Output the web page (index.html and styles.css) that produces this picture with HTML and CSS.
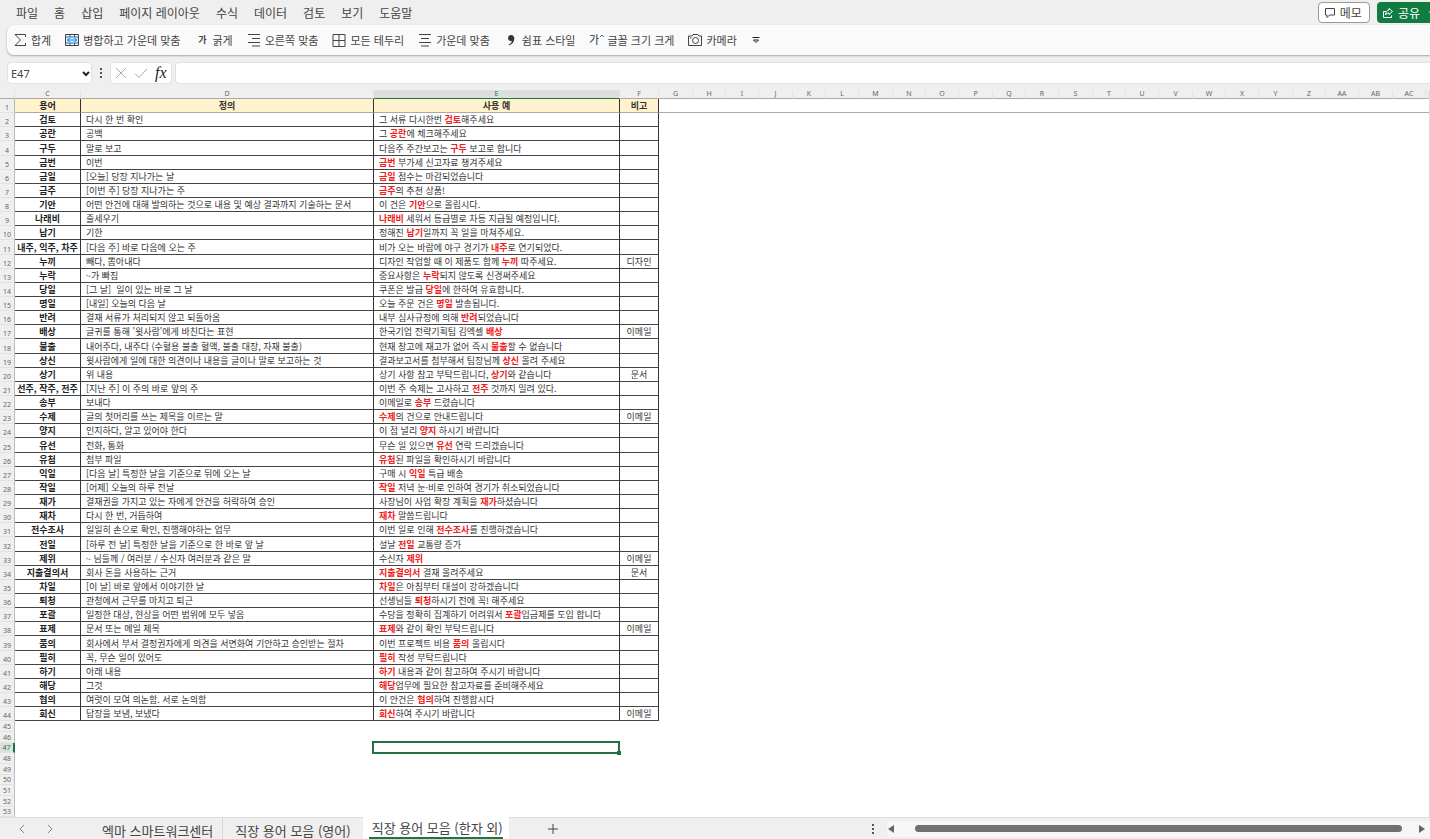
FILE: index.html
```html
<!DOCTYPE html>
<html lang="ko">
<head>
<meta charset="utf-8">
<title>직장 용어 모음</title>
<link rel="stylesheet" href="styles.css">
</head>
<body>
<header class="menubar">
  <nav class="menus">
    <button>파일</button><button>홈</button><button>삽입</button><button>페이지 레이아웃</button><button>수식</button><button>데이터</button><button>검토</button><button>보기</button><button>도움말</button>
  </nav>
  <div class="actions">
    <button class="memo"><svg width="12" height="12" viewBox="0 0 12 12"><path d="M1.500 1.500h9v6.500h-5l-2.500 2.500v-2.500h-1.500z"/></svg>메모</button>
    <button class="share"><svg width="12" height="12" viewBox="0 0 12 12"><path d="M4 4.500H1.500v6h8V8.500M7 1.500l3.500 3L7 7.500V6C5.500 6 4.500 6.500 3.500 8 3.500 5 5 3.200 7 3z"/></svg>공유<svg class="share-more" width="8" height="8" viewBox="0 0 8 8"><path d="M1 2.500l3 3 3-3"/></svg></button>
  </div>
</header>

<div class="toolbar">
  <button><svg width="14" height="14" viewBox="0 0 14 14"><path d="M12.500 4V1.500H2L7.500 7 2 12.500h10.500V10"/></svg>합계</button>
  <button><svg width="14" height="14" viewBox="0 0 14 14"><path class="pale" d="M1 4h12v6H1z"/><path d="M.5 1.500v11h13v-11zM5 1.500V4M9.500 1.500V4M5 10v2.500M9.500 10v2.500"/><path class="blue-line" d="M.5 4h13M.5 10h13M2.500 7h9M4.500 5l-2 2 2 2M9.500 5l2 2-2 2"/></svg>병합하고 가운데 맞춤</button>
  <button><span class="glyph bold">가</span>굵게</button>
  <button><svg width="14" height="14" viewBox="0 0 14 14"><path d="M1 1.500h12M5 5.500h8M1 9.500h12M5 13h8"/></svg>오른쪽 맞춤</button>
  <button><svg width="14" height="14" viewBox="0 0 14 14"><path d="M1 1.500h12v12H1zM7 1.500v12M1 7.500h12"/></svg>모든 테두리</button>
  <button><svg width="14" height="14" viewBox="0 0 14 14"><path d="M1 1.500h12M3 5.500h8M1 9.500h12M3 13h8"/></svg>가운데 맞춤</button>
  <button><svg width="14" height="14" viewBox="0 0 14 14"><path class="solid" d="M7 2a3 3 0 1 0 .8 5.900C7.500 9.500 6.500 10.800 4.500 11.800l.5.7C8.500 11.200 10.300 8.800 10.300 5.300 10.300 3.300 9 2 7 2z"/></svg>쉼표 스타일</button>
  <button><svg class="grow" width="14" height="14" viewBox="0 0 14 14"><text x="-1" y="11">가</text><path class="blue-line" d="M10 4l2-2 2 2"/></svg>글꼴 크기 크게</button>
  <button><svg width="14" height="14" viewBox="0 0 14 14"><path d="M.5 3h3.500l1-1.500h5L11 3h2.500v9.500H.5z"/><circle cx="7.500" cy="7.500" r="3"/><path d="M2 5h1.500"/></svg>카메라</button>
  <button aria-label="도구 모음 옵션"><svg class="more" width="10" height="8" viewBox="0 0 10 8"><path d="M1.500 1.500h7M2.500 4L5 6.500 7.500 4z"/></svg></button>
</div>

<div class="formulabar">
  <div class="namebox">
    <select aria-label="이름 상자"><option>E47</option></select>
    <svg width="8" height="6" viewBox="0 0 8 6"><path d="M1 1l3 3 3-3"/></svg>
  </div>
  <svg class="dots" width="4" height="12" viewBox="0 0 4 12"><path d="M1 1h2v2H1zM1 5h2v2H1zM1 9h2v2H1z"/></svg>
  <div class="entry">
    <button aria-label="취소"><svg width="12" height="12" viewBox="0 0 12 12"><path d="M1 1l10 10M11 1L1 11"/></svg></button>
    <button aria-label="입력"><svg width="14" height="12" viewBox="0 0 14 12"><path d="M1 6.500l4 4L13 2"/></svg></button>
    <button class="fx" aria-label="함수 삽입">fx</button>
  </div>
  <input class="formula" type="text" aria-label="수식 입력줄">
</div>

<main class="sheet">
<table>
<colgroup>
<col class="w-num"><col class="w-c"><col class="w-d"><col class="w-e"><col class="w-f">
<col class="w-b"><col class="w-a"><col class="w-a"><col class="w-b"><col class="w-a"><col class="w-a"><col class="w-b"><col class="w-a"><col class="w-a"><col class="w-b"><col class="w-a"><col class="w-a"><col class="w-b"><col class="w-a"><col class="w-a"><col class="w-b"><col class="w-a"><col class="w-a"><col class="w-b"><col class="w-a"><col class="w-a"><col class="w-b"><col class="w-a"><col>
</colgroup>
<thead>
<tr><th class="corner"></th><th>C</th><th>D</th><th class="on">E</th><th>F</th><th>G</th><th>H</th><th>I</th><th>J</th><th>K</th><th>L</th><th>M</th><th>N</th><th>O</th><th>P</th><th>Q</th><th>R</th><th>S</th><th>T</th><th>U</th><th>V</th><th>W</th><th>X</th><th>Y</th><th>Z</th><th>AA</th><th>AB</th><th>AC</th><th></th></tr>
</thead>
<tbody class="data">
<tr class="title"><th>1</th><td>용어</td><td>정의</td><td>사용 예</td><td>비고</td><td class="rest" colspan="24"></td></tr>
<tr><th>2</th><td>검토</td><td>다시 한 번 확인</td><td>그 서류 다시한번 <b>검토</b>해주세요</td><td></td></tr>
<tr><th>3</th><td>공란</td><td>공백</td><td>그 <b>공란</b>에 체크해주세요</td><td></td></tr>
<tr><th>4</th><td>구두</td><td>말로 보고</td><td>다음주 주간보고는 <b>구두</b> 보고로 합니다</td><td></td></tr>
<tr><th>5</th><td>금번</td><td>이번</td><td><b>금번</b> 부가세 신고자료 챙겨주세요</td><td></td></tr>
<tr><th>6</th><td>금일</td><td>[오늘] 당장 지나가는 날</td><td><b>금일</b> 접수는 마감되었습니다</td><td></td></tr>
<tr><th>7</th><td>금주</td><td>[이번 주] 당장 지나가는 주</td><td><b>금주</b>의 추천 상품!</td><td></td></tr>
<tr><th>8</th><td>기안</td><td>어떤 안건에 대해 발의하는 것으로 내용 및 예상 결과까지 기술하는 문서</td><td>이 건은 <b>기안</b>으로 올립시다.</td><td></td></tr>
<tr><th>9</th><td>나래비</td><td>줄세우기</td><td><b>나래비</b> 세워서 등급별로 차등 지급될 예정입니다.</td><td></td></tr>
<tr><th>10</th><td>납기</td><td>기한</td><td>정해진 <b>납기</b>일까지 꼭 일을 마쳐주세요.</td><td></td></tr>
<tr><th>11</th><td>내주, 익주, 차주</td><td>[다음 주] 바로 다음에 오는 주</td><td>비가 오는 바람에 야구 경기가 <b>내주</b>로 연기되었다.</td><td></td></tr>
<tr><th>12</th><td>누끼</td><td>빼다, 뽑아내다</td><td>디자인 작업할 때 이 제품도 함께 <b>누끼</b> 따주세요.</td><td>디자인</td></tr>
<tr><th>13</th><td>누락</td><td>~가 빠짐</td><td>중요사항은 <b>누락</b>되지 않도록 신경써주세요</td><td></td></tr>
<tr><th>14</th><td>당일</td><td>[그 날]&nbsp; 일이 있는 바로 그 날</td><td>쿠폰은 발급 <b>당일</b>에 한하여 유효합니다.</td><td></td></tr>
<tr><th>15</th><td>명일</td><td>[내일] 오늘의 다음 날</td><td>오늘 주문 건은 <b>명일</b> 발송됩니다.</td><td></td></tr>
<tr><th>16</th><td>반려</td><td>결재 서류가 처리되지 않고 되돌아옴</td><td>내부 심사규정에 의해 <b>반려</b>되었습니다</td><td></td></tr>
<tr><th>17</th><td>배상</td><td>글귀를 통해 '윗사람'에게 바친다는 표현</td><td>한국기업 전략기획팀 김엑셀 <b>배상</b></td><td>이메일</td></tr>
<tr><th>18</th><td>불출</td><td>내어주다, 내주다 (수혈용 불출 혈액, 불출 대장, 자재 불출)</td><td>현재 창고에 재고가 없어 즉시 <b>불출</b>할 수 없습니다</td><td></td></tr>
<tr><th>19</th><td>상신</td><td>윗사람에게 일에 대한 의견이나 내용을 글이나 말로 보고하는 것</td><td>결과보고서를 첨부해서 팀장님께 <b>상신</b> 올려 주세요</td><td></td></tr>
<tr><th>20</th><td>상기</td><td>위 내용</td><td>상기 사항 참고 부탁드립니다, <b>상기</b>와 같습니다</td><td>문서</td></tr>
<tr><th>21</th><td>선주, 작주, 전주</td><td>[지난 주] 이 주의 바로 앞의 주</td><td>이번 주 숙제는 고사하고 <b>전주</b> 것까지 밀려 있다.</td><td></td></tr>
<tr><th>22</th><td>송부</td><td>보내다</td><td>이메일로 <b>송부</b> 드렸습니다</td><td></td></tr>
<tr><th>23</th><td>수제</td><td>글의 첫머리를 쓰는 제목을 이르는 말</td><td><b>수제</b>의 건으로 안내드립니다</td><td>이메일</td></tr>
<tr><th>24</th><td>양지</td><td>인지하다, 알고 있어야 한다</td><td>이 점 널리 <b>양지</b> 하시기 바랍니다</td><td></td></tr>
<tr><th>25</th><td>유선</td><td>전화, 통화</td><td>무슨 일 있으면 <b>유선</b> 연락 드리겠습니다</td><td></td></tr>
<tr><th>26</th><td>유첨</td><td>첨부 파일</td><td><b>유첨</b>된 파일을 확인하시기 바랍니다</td><td></td></tr>
<tr><th>27</th><td>익일</td><td>[다음 날] 특정한 날을 기준으로 뒤에 오는 날</td><td>구매 시 <b>익일</b> 특급 배송</td><td></td></tr>
<tr><th>28</th><td>작일</td><td>[어제] 오늘의 하루 전날</td><td><b>작일</b> 저녁 눈·비로 인하여 경기가 취소되었습니다</td><td></td></tr>
<tr><th>29</th><td>재가</td><td>결재권을 가지고 있는 자에게 안건을 허락하여 승인</td><td>사장님이 사업 확장 계획을 <b>재가</b>하셨습니다</td><td></td></tr>
<tr><th>30</th><td>재차</td><td>다시 한 번, 거듭하여</td><td><b>재차</b> 말씀드립니다</td><td></td></tr>
<tr><th>31</th><td>전수조사</td><td>일일히 손으로 확인, 진행해야하는 업무</td><td>이번 일로 인해 <b>전수조사</b>를 진행하겠습니다</td><td></td></tr>
<tr><th>32</th><td>전일</td><td>[하루 전 날] 특정한 날을 기준으로 한 바로 앞 날</td><td>설날 <b>전일</b> 교통량 증가</td><td></td></tr>
<tr><th>33</th><td>제위</td><td>~ 님들께 / 여러분 / 수신자 여러분과 같은 말</td><td>수신자 <b>제위</b></td><td>이메일</td></tr>
<tr><th>34</th><td>지출결의서</td><td>회사 돈을 사용하는 근거</td><td><b>지출결의서</b> 결재 올려주세요</td><td>문서</td></tr>
<tr><th>35</th><td>차일</td><td>[이 날] 바로 앞에서 이야기한 날</td><td><b>차일</b>은 아침부터 대설이 강하겠습니다</td><td></td></tr>
<tr><th>36</th><td>퇴청</td><td>관청에서 근무를 마치고 퇴근</td><td>선생님들 <b>퇴청</b>하시기 전에 꼭! 해주세요</td><td></td></tr>
<tr><th>37</th><td>포괄</td><td>일정한 대상, 현상을 어떤 범위에 모두 넣음</td><td>수당을 정확히 집계하기 어려워서 <b>포괄</b>입금제를 도입 합니다</td><td></td></tr>
<tr><th>38</th><td>표제</td><td>문서 또는 메일 제목</td><td><b>표제</b>와 같이 확인 부탁드립니다</td><td>이메일</td></tr>
<tr><th>39</th><td>품의</td><td>회사에서 부서 결정권자에게 의견을 서면화여 기안하고 승인받는 절차</td><td>이번 프로젝트 비용 <b>품의</b> 올립시다</td><td></td></tr>
<tr><th>40</th><td>필히</td><td>꼭, 무슨 일이 있어도</td><td><b>필히</b> 작성 부탁드립니다</td><td></td></tr>
<tr><th>41</th><td>하기</td><td>아래 내용</td><td><b>하기</b> 내용과 같이 참고하여 주시기 바랍니다</td><td></td></tr>
<tr><th>42</th><td>해당</td><td>그것</td><td><b>해당</b>업무에 필요한 참고자료를 준비해주세요</td><td></td></tr>
<tr><th>43</th><td>협의</td><td>여럿이 모여 의논함. 서로 논의함</td><td>이 안건은 <b>협의</b>하여 진행합시다</td><td></td></tr>
<tr><th>44</th><td>회신</td><td>답장을 보냄, 보냈다</td><td><b>회신</b>하여 주시기 바랍니다</td><td>이메일</td></tr>
</tbody>
<tbody class="blank">
<tr><th>45</th></tr>
<tr><th>46</th></tr>
<tr><th class="on">47</th><td></td><td></td><td class="selected"></td></tr>
<tr><th>48</th></tr>
<tr><th>49</th></tr>
<tr><th>50</th></tr>
<tr><th>51</th></tr>
<tr><th>52</th></tr>
<tr><th>53</th></tr>
</tbody>
</table>
</main>

<footer class="tabbar">
  <div class="arrows">
    <button aria-label="이전 시트"><svg width="6" height="10" viewBox="0 0 6 10"><path d="M5 1L1 5l4 4"/></svg></button>
    <button aria-label="다음 시트"><svg width="6" height="10" viewBox="0 0 6 10"><path d="M1 1l4 4-4 4"/></svg></button>
  </div>
  <button class="tab">엑마 스마트워크센터</button>
  <button class="tab">직장 용어 모음 (영어)</button>
  <button class="tab current"><span>직장 용어 모음 (한자 외)</span></button>
  <button class="add" aria-label="새 시트"><svg width="12" height="12" viewBox="0 0 12 12"><path d="M6 1v10M1 6h10"/></svg></button>
  <svg class="dots" width="4" height="12" viewBox="0 0 4 12"><path d="M1 1h2v2H1zM1 5h2v2H1zM1 9h2v2H1z"/></svg>
  <div class="scroll">
    <button aria-label="왼쪽으로"><svg width="8" height="10" viewBox="0 0 8 10"><path d="M7 1v8L1 5z"/></svg></button>
    <div class="thumb"></div>
    <button aria-label="오른쪽으로"><svg width="8" height="10" viewBox="0 0 8 10"><path d="M1 1v8l6-4z"/></svg></button>
  </div>
</footer>
</body>
</html>
```

FILE: styles.css
```css
* { box-sizing: border-box; }

body {
  margin: 0;
  height: 100vh;
  display: flex;
  flex-direction: column;
  overflow: hidden;
  background: #efefef;
  color: #444;
  font-family: "Noto Sans CJK KR", "Noto Sans", sans-serif;
  font-size: 11px;
}

button, select, input { font: inherit; color: inherit; }
button { display: flex; align-items: center; padding: 0; border: 0; background: none; white-space: nowrap; }
svg { flex: none; fill: none; stroke: #444; }

/* menu */
.menubar { display: flex; justify-content: space-between; height: 25px; overflow: hidden; font-size: 12px; }
.menus { display: flex; gap: 16px; padding-left: 16px; }
.actions { display: flex; gap: 7px; padding: 2px 0; }
.actions button { height: 21px; line-height: 16px; border-radius: 4px; gap: 4px; }
.memo { padding: 0 7px 0 5px; border: 1px solid #999; background: #fff; }
.actions .share { margin-right: -14px; padding: 0 8px 0 5px; background: #107c41; color: #fff; }
.share svg { stroke: #fff; }
.share .share-more { margin-left: 4px; }

/* quick tools */
.toolbar {
  display: flex;
  gap: 14px;
  height: 30px;
  margin-left: 7px;
  padding-left: 6px;
  border-radius: 7px 0 0 7px;
  background: #fafafa;
  box-shadow: 0 1px 2px #0000004d;
}
.toolbar button { gap: 4px; line-height: 16px; }
.glyph { width: 14px; padding-left: 2px; font-size: 9px; }
.bold { font-weight: 700; }
.grow { overflow: visible; }
.grow text { fill: #333; stroke: none; font-size: 11px; }
.pale { fill: #d6ebfa; stroke: none; }
.blue-line { stroke: #1c7ac7; }
.solid { fill: #333; stroke: none; }
.more { stroke: #222; }

/* formula bar */
.formulabar { display: flex; align-items: center; height: 22px; margin: 7px 0 6px 7px; }
.namebox { position: relative; width: 85px; }
.namebox select {
  appearance: none;
  display: block;
  width: 100%;
  height: 22px;
  padding: 0 3px;
  border: 1px solid #e1e1e1;
  border-radius: 4px;
  background: #fff;
  font-family: "Noto Sans", sans-serif;
  font-size: 11px;
}
.namebox svg { position: absolute; right: 2px; top: 9px; stroke: #222; stroke-width: 2; pointer-events: none; }
.dots { stroke: none; fill: #555; }
.formulabar .dots { margin: 0 7px; }
.entry { display: flex; align-items: center; gap: 7px; width: 62px; height: 22px; padding-left: 4px; border: 1px solid #e1e1e1; border-radius: 4px; background: #fff; }
.entry svg { stroke: #aaa; }
.fx { font-family: "Liberation Serif", serif; font-style: italic; font-size: 16px; line-height: 16px; color: #222; }
.formula { flex: 1; height: 22px; margin-left: 3px; border: 1px solid #e1e1e1; border-right: 0; border-radius: 4px 0 0 4px; background: #fff; }

/* grid */
.sheet { flex: 1; min-height: 0; overflow: hidden; background: linear-gradient(#efefef 9px, #fff 9px); border-right: 1px solid #dcdcdc; }
table { width: 100%; table-layout: fixed; border-collapse: separate; border-spacing: 0; }
.w-num { width: 15px; }
.w-c { width: 66px; }
.w-d { width: 293px; }
.w-e { width: 246px; }
.w-f { width: 39px; }
.w-a { width: 33px; }
.w-b { width: 34px; }
th, td { padding: 0; white-space: nowrap; }
th { font-family: "Noto Sans", sans-serif; font-size: 7px; font-weight: 400; color: #666; background: #efefef; }
thead th { height: 9px; line-height: 8px; border-right: 1px solid #e2e2e2; border-bottom: 1px solid #aaa; }
thead .on { background: #dedede; color: #107c41; border-bottom-color: #107c41; }
tbody th { line-height: 9px; vertical-align: bottom; border-right: 1px solid #bbb; border-bottom: 1px solid #e2e2e2; }
tbody .on { background: #dedede; color: #107c41; border-right: 2px solid #107c41; }

.data tr { height: 14px; }
.data tr:nth-child(7n + 4) { height: 15px; }
.data td { padding: 0 5px; border-right: 1px solid #333; border-bottom: 1px solid #444; font-size: 9px; line-height: 13px; color: #333; overflow: hidden; }
.data td:nth-child(2) { padding: 0; text-align: center; font-weight: 700; color: #222; }
.data td:nth-child(5) { padding: 0; text-align: center; }
.data .title td { padding: 0; text-align: center; font-weight: 700; background: #fff2cc; border-bottom-color: #aaa; }
.data .title .rest { background: #fff; border-right: 0; }
.data b { color: #f02020; }

.blank tr { height: 11px; }
.blank tr:nth-child(3n) { height: 10px; }
.selected { position: relative; }
.selected::before { content: ""; position: absolute; inset: -2px 0 -1px -2px; border: 2px solid #217346; }
.selected::after { content: ""; position: absolute; right: -1px; bottom: -2px; width: 4px; height: 4px; background: #217346; }

/* sheet tabs */
.tabbar { display: flex; align-items: center; height: 22px; border-top: 1px solid #dedede; font-size: 13px; }
.tabbar button { justify-content: center; }
.arrows { display: flex; gap: 22px; width: 92px; padding-left: 19px; }
.arrows svg { stroke: #888; }
.tab { height: 21px; padding: 4px 9px 0 10px; line-height: 17px; }
.tab + .tab { border-left: 1px solid #d8d8d8; padding-left: 12px; padding-right: 12px; }
.tab + .current { align-self: flex-start; height: 22px; padding: 0 6px; margin-top: -1px; border: 0; background: #fff; }
.current span { height: 22px; padding: 2px 0 0 3px; line-height: 18px; border-bottom: 2px solid #107c41; }
.add { margin: 0 auto 0 38px; padding: 0; }
.scroll { display: flex; align-items: center; gap: 20px; width: 38%; height: 16px; margin-left: 12px; padding: 0 4px 0 0; border-radius: 4px; background: #f6f6f6; }
.scroll svg { fill: #666; stroke: none; }
.scroll button:last-child { margin-left: -4px; }
.thumb { flex: 1; height: 7px; border-radius: 4px; background: #717171; }
```
